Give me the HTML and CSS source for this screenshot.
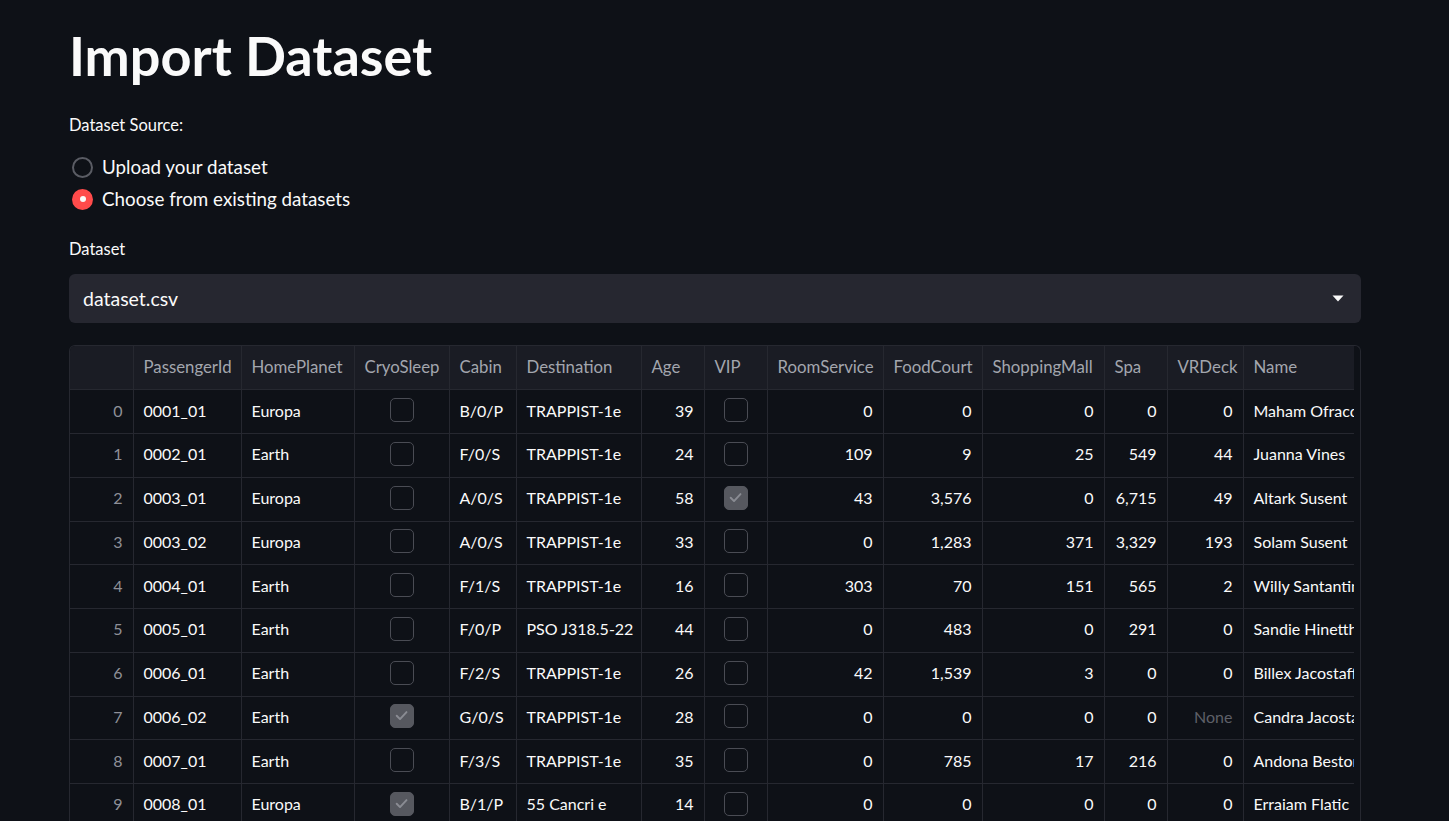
FILE: index.html
```html
<!DOCTYPE html>
<html lang="en">
<head>
<meta charset="utf-8">
<title>Import Dataset</title>
<link rel="stylesheet" href="styles.css">
</head>
<body>
<main class="app">
  <h1 class="title">Import Dataset</h1>

  <div class="field">
    <div class="label">Dataset Source:</div>
    <div class="radios">
      <div class="radio"><span class="dot"></span><span>Upload your dataset</span></div>
      <div class="radio checked"><span class="dot"></span><span>Choose from existing datasets</span></div>
    </div>
  </div>

  <div class="field field-select">
    <div class="label">Dataset</div>
    <div class="select">
      <span>dataset.csv</span>
      <svg class="caret" width="12" height="7" viewBox="0 0 12 7"><path d="M0.5 0.5h11L6 6.5z" fill="#fafafa"/></svg>
    </div>
  </div>

  <div class="grid-wrap">
    <div class="grid-scroll">
      <table class="grid">
        <colgroup>
          <col style="width:63px"><col style="width:108px"><col style="width:113px"><col style="width:95px"><col style="width:67px"><col style="width:125px"><col style="width:63px"><col style="width:63px"><col style="width:116px"><col style="width:99px"><col style="width:122px"><col style="width:63px"><col style="width:76px"><col style="width:170px">
        </colgroup>
        <thead>
          <tr>
            <th></th><th>PassengerId</th><th>HomePlanet</th><th>CryoSleep</th><th>Cabin</th><th>Destination</th><th>Age</th><th>VIP</th><th>RoomService</th><th>FoodCourt</th><th>ShoppingMall</th><th>Spa</th><th>VRDeck</th><th>Name</th>
          </tr>
        </thead>
        <tbody>
          <tr><td class="idx">0</td><td>0001_01</td><td>Europa</td><td class="cb"><span class="box"></span></td><td>B/0/P</td><td>TRAPPIST-1e</td><td class="num">39</td><td class="cb"><span class="box"></span></td><td class="num">0</td><td class="num">0</td><td class="num">0</td><td class="num">0</td><td class="num">0</td><td>Maham Ofracculy</td></tr>
          <tr><td class="idx">1</td><td>0002_01</td><td>Earth</td><td class="cb"><span class="box"></span></td><td>F/0/S</td><td>TRAPPIST-1e</td><td class="num">24</td><td class="cb"><span class="box"></span></td><td class="num">109</td><td class="num">9</td><td class="num">25</td><td class="num">549</td><td class="num">44</td><td>Juanna Vines</td></tr>
          <tr><td class="idx">2</td><td>0003_01</td><td>Europa</td><td class="cb"><span class="box"></span></td><td>A/0/S</td><td>TRAPPIST-1e</td><td class="num">58</td><td class="cb"><span class="box on"><svg viewBox="0 0 24 24"><path d="M6.5 12.3l3.8 3.8 7.4-8" fill="none" stroke="#8a8c93" stroke-width="2.2" stroke-linecap="round" stroke-linejoin="round"/></svg></span></td><td class="num">43</td><td class="num">3,576</td><td class="num">0</td><td class="num">6,715</td><td class="num">49</td><td>Altark Susent</td></tr>
          <tr><td class="idx">3</td><td>0003_02</td><td>Europa</td><td class="cb"><span class="box"></span></td><td>A/0/S</td><td>TRAPPIST-1e</td><td class="num">33</td><td class="cb"><span class="box"></span></td><td class="num">0</td><td class="num">1,283</td><td class="num">371</td><td class="num">3,329</td><td class="num">193</td><td>Solam Susent</td></tr>
          <tr><td class="idx">4</td><td>0004_01</td><td>Earth</td><td class="cb"><span class="box"></span></td><td>F/1/S</td><td>TRAPPIST-1e</td><td class="num">16</td><td class="cb"><span class="box"></span></td><td class="num">303</td><td class="num">70</td><td class="num">151</td><td class="num">565</td><td class="num">2</td><td>Willy Santantines</td></tr>
          <tr><td class="idx">5</td><td>0005_01</td><td>Earth</td><td class="cb"><span class="box"></span></td><td>F/0/P</td><td>PSO J318.5-22</td><td class="num">44</td><td class="cb"><span class="box"></span></td><td class="num">0</td><td class="num">483</td><td class="num">0</td><td class="num">291</td><td class="num">0</td><td>Sandie Hinetthews</td></tr>
          <tr><td class="idx">6</td><td>0006_01</td><td>Earth</td><td class="cb"><span class="box"></span></td><td>F/2/S</td><td>TRAPPIST-1e</td><td class="num">26</td><td class="cb"><span class="box"></span></td><td class="num">42</td><td class="num">1,539</td><td class="num">3</td><td class="num">0</td><td class="num">0</td><td>Billex Jacostaffey</td></tr>
          <tr><td class="idx">7</td><td>0006_02</td><td>Earth</td><td class="cb"><span class="box on"><svg viewBox="0 0 24 24"><path d="M6.5 12.3l3.8 3.8 7.4-8" fill="none" stroke="#8a8c93" stroke-width="2.2" stroke-linecap="round" stroke-linejoin="round"/></svg></span></td><td>G/0/S</td><td>TRAPPIST-1e</td><td class="num">28</td><td class="cb"><span class="box"></span></td><td class="num">0</td><td class="num">0</td><td class="num">0</td><td class="num">0</td><td class="num none">None</td><td>Candra Jacostaffey</td></tr>
          <tr><td class="idx">8</td><td>0007_01</td><td>Earth</td><td class="cb"><span class="box"></span></td><td>F/3/S</td><td>TRAPPIST-1e</td><td class="num">35</td><td class="cb"><span class="box"></span></td><td class="num">0</td><td class="num">785</td><td class="num">17</td><td class="num">216</td><td class="num">0</td><td>Andona Beston</td></tr>
          <tr><td class="idx">9</td><td>0008_01</td><td>Europa</td><td class="cb"><span class="box on"><svg viewBox="0 0 24 24"><path d="M6.5 12.3l3.8 3.8 7.4-8" fill="none" stroke="#8a8c93" stroke-width="2.2" stroke-linecap="round" stroke-linejoin="round"/></svg></span></td><td>B/1/P</td><td>55 Cancri e</td><td class="num">14</td><td class="cb"><span class="box"></span></td><td class="num">0</td><td class="num">0</td><td class="num">0</td><td class="num">0</td><td class="num">0</td><td>Erraiam Flatic</td></tr>
        </tbody>
      </table>
    </div>
  </div>
</main>
</body>
</html>
```

FILE: styles.css
```css
html, body {
  margin: 0;
  padding: 0;
  background: #0e1117;
}
body {
  color: #fafafa;
  font-family: Lato, "Noto Sans", sans-serif;
  overflow: hidden;
  height: 821px;
}
.app {
  width: 1292px;
  padding: 0 0 0 69px;
}
.title {
  margin: 0;
  padding-top: 24px;
  font-size: 54px;
  line-height: 64px;
  font-weight: 700;
  letter-spacing: 0;
}
.field {
  margin-top: 25px;
}
.label {
  font-size: 16.5px;
  line-height: 24px;
}
.radios {
  margin-top: 18px;
  display: flex;
  flex-direction: column;
  gap: 8px;
}
.radio {
  display: flex;
  align-items: center;
  gap: 9px;
  font-size: 18.8px;
  line-height: 24px;
}
.dot {
  width: 17px;
  height: 17px;
  margin-left: 3px;
  border: 2px solid #5a5c64;
  border-radius: 50%;
  box-sizing: content-box;
  position: relative;
}
.radio.checked .dot {
  background: #ff4b4b;
  border-color: #ff4b4b;
}
.radio.checked .dot::after {
  content: "";
  position: absolute;
  left: 50%;
  top: 50%;
  width: 6px;
  height: 6px;
  margin: -3px 0 0 -3px;
  background: #fafafa;
  border-radius: 50%;
}
.field-select {
  margin-top: 26px;
}
.select {
  margin-top: 13px;
  height: 49px;
  background: #262730;
  border-radius: 6px;
  display: flex;
  align-items: center;
  justify-content: space-between;
  padding: 0 17px 0 14px;
  font-size: 19.5px;
}
.grid-wrap {
  margin-top: 22px;
  border: 1px solid #262830;
  border-bottom: none;
  border-radius: 6px 6px 0 0;
  padding-right: 6px;
  overflow: hidden;
}
.grid-scroll {
  overflow: hidden;
  width: 1284px;
}
.grid {
  border-collapse: collapse;
  table-layout: fixed;
  width: 1343px;
  font-size: 16px;
}
.grid tr {
  height: 43.75px;
}
.grid th, .grid td {
  border-right: 1px solid #262830;
  border-bottom: 1px solid #262830;
  padding: 0 10px 3px;
  white-space: nowrap;
  overflow: hidden;
  text-overflow: clip;
  text-align: left;
}
.grid th {
  background: #1a1c24;
  color: #a3a6ae;
  font-weight: 400;
  font-size: 16.8px;
  padding-bottom: 2px;
}
.grid td {
  color: #fafafa;
}
.grid td.idx {
  text-align: right;
  color: #8e9098;
}
.grid td.num {
  text-align: right;
}
.grid td.none {
  color: #5e6068;
}
.grid td.cb {
  text-align: center;
  padding: 0 0 3px;
}
.box {
  display: inline-block;
  vertical-align: middle;
  width: 24px;
  height: 24px;
  box-sizing: border-box;
  border: 1.5px solid #4a4c54;
  border-radius: 5px;
}
.box.on {
  background: #56585f;
  border-color: #56585f;
}
.box svg {
  display: block;
  width: 21px;
  height: 21px;
}
```
